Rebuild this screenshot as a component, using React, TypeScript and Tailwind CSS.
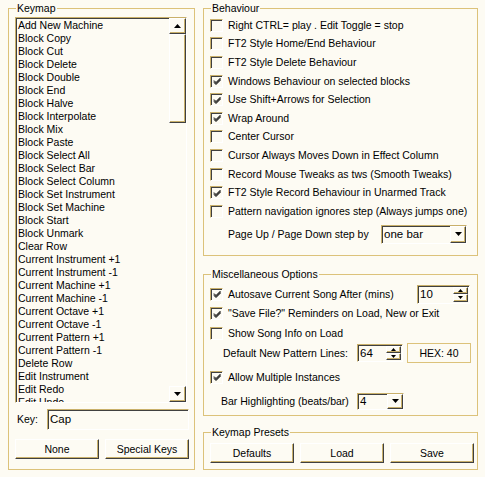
import React from "react";

const SUNKEN =
  "border border-t-[#c9b06a] border-l-[#c9b06a] border-b-white border-r-white shadow-[inset_1px_1px_0_#404040]";
const RAISED =
  "border border-t-white border-l-white border-b-[#404040] border-r-[#404040] shadow-[inset_-1px_-1px_0_#c9b06a] bg-[#fdfbf3]";

const KEYS = [
  "Add New Machine",
  "Block Copy",
  "Block Cut",
  "Block Delete",
  "Block Double",
  "Block End",
  "Block Halve",
  "Block Interpolate",
  "Block Mix",
  "Block Paste",
  "Block Select All",
  "Block Select Bar",
  "Block Select Column",
  "Block Set Instrument",
  "Block Set Machine",
  "Block Start",
  "Block Unmark",
  "Clear Row",
  "Current Instrument +1",
  "Current Instrument -1",
  "Current Machine +1",
  "Current Machine -1",
  "Current Octave +1",
  "Current Octave -1",
  "Current Pattern +1",
  "Current Pattern -1",
  "Delete Row",
  "Edit Instrument",
  "Edit Redo",
  "Edit Undo",
];

const BEHAVIOUR: [string, boolean][] = [
  ["Right CTRL= play . Edit Toggle = stop", false],
  ["FT2 Style Home/End Behaviour", false],
  ["FT2 Style Delete Behaviour", false],
  ["Windows Behaviour on selected blocks", true],
  ["Use Shift+Arrows for Selection", true],
  ["Wrap Around", true],
  ["Center Cursor", false],
  ["Cursor Always Moves Down in Effect Column", false],
  ["Record Mouse Tweaks as tws (Smooth Tweaks)", false],
  ["FT2 Style Record Behaviour in Unarmed Track", true],
  ["Pattern navigation ignores step (Always jumps one)", false],
];

function Tri({ up = false, w = 7 }: { up?: boolean; w?: number }) {
  const h = Math.ceil(w / 2);
  return (
    <svg width={w} height={h} viewBox={`0 0 ${w} ${h}`} className="block">
      <polygon points={up ? `0,${h} ${w},${h} ${w / 2},0` : `0,0 ${w},0 ${w / 2},${h}`} fill="#000" />
    </svg>
  );
}

function Check({ on }: { on: boolean }) {
  return (
    <span className={`${SUNKEN} w-[13px] h-[13px] shrink-0 bg-[#fdfbf3] flex items-center justify-center`}>
      {on && (
        <svg width="9" height="9" viewBox="0 0 9 9" className="block ml-[1px] mt-[1px]">
          <path d="M1 3.5 L3 5.5 L7.5 1 M1 4.5 L3 6.5 L7.5 2 M1 5.5 L3 7.5 L7.5 3" stroke="#000" strokeWidth="1" fill="none" />
        </svg>
      )}
    </span>
  );
}

function Row({ label, on }: { label: string; on: boolean }) {
  return (
    <div className="flex items-center gap-[5px]">
      <Check on={on} />
      <span className="whitespace-nowrap">{label}</span>
    </div>
  );
}

function Combo({ value, w }: { value: string; w: string }) {
  return (
    <div className={`${SUNKEN} ${w} flex items-stretch bg-[#fdfbf3]`}>
      <span className="flex-1 pl-[2px] flex items-center text-[11.5px]">{value}</span>
      <span className={`${RAISED} w-[16px] flex items-center justify-center`}>
        <Tri w={7} />
      </span>
    </div>
  );
}

function Spin({ value, w }: { value: string; w: string }) {
  return (
    <div className={`${SUNKEN} ${w} flex items-stretch bg-[#fdfbf3]`}>
      <span className="flex-1 pl-[2px] flex items-center text-[11.5px]">{value}</span>
      <span className="flex flex-col w-[15px] mr-[1px] my-[1px]">
        <span className={`${RAISED} flex-1 flex items-center justify-center`}>
          <Tri up w={5} />
        </span>
        <span className={`${RAISED} flex-1 flex items-center justify-center`}>
          <Tri w={5} />
        </span>
      </span>
    </div>
  );
}

function Group({ title, className, children }: { title: string; className: string; children: React.ReactNode }) {
  return (
    <fieldset className={`border border-[#dcc27a] ${className}`}>
      <legend className="ml-[7px] px-[1px] leading-[13px]">{title}</legend>
      {children}
    </fieldset>
  );
}

function Button({ label }: { label: string }) {
  return (
    <button className={`${RAISED} w-[84px] h-[20px] flex items-center justify-center`}>{label}</button>
  );
}

export default function App() {
  return (
    <div className="w-[485px] h-[477px] bg-[#fdfbf3] text-black text-[10.5px] leading-[13px] font-['Liberation_Sans',Arial,sans-serif] flex gap-[8px] pl-[8px] pt-[2px]">
      <Group title="Keymap" className="w-[187px] h-[468px]">
        <div className="pl-[6px] pt-[2px]">
          <div className={`${SUNKEN} w-[172px] h-[386px] flex overflow-hidden bg-[#fdfbf3]`}>
            <div className="flex-1 pl-[2px] pt-[1px] flex flex-col">
              {KEYS.map((k) => (
                <span key={k} className="h-[13px] whitespace-nowrap">
                  {k}
                </span>
              ))}
            </div>
            <div className="w-[17px] flex flex-col">
              <span className={`${RAISED} h-[16px] flex items-center justify-center`}>
                <Tri up />
              </span>
              <span className={`${RAISED} h-[89px]`} />
              <span className="flex-1" />
              <span className={`${RAISED} h-[16px] flex items-center justify-center`}>
                <Tri />
              </span>
            </div>
          </div>
          <div className="flex items-center mt-[6px] gap-[9px] pl-[2px]">
            <span>Key:</span>
            <div className={`${SUNKEN} w-[142px] h-[21px] pl-[2px] flex items-center text-[11.5px]`}>Cap</div>
          </div>
          <div className="flex gap-[6px] mt-[9px]">
            <Button label="None" />
            <Button label="Special Keys" />
          </div>
        </div>
      </Group>

      <div className="w-[275px] flex flex-col">
        <Group title="Behaviour" className="h-[254px]">
          <div className="pl-[6px] pt-[1px] flex flex-col">
            {BEHAVIOUR.map(([label, on]) => (
              <div key={label} className="h-[18.6px] flex items-center">
                <Row label={label} on={on} />
              </div>
            ))}
            <div className="flex items-center mt-[4px] pl-[18px]">
              <span className="w-[153px] whitespace-nowrap">Page Up / Page Down step by</span>
              <Combo value="one bar" w="w-[86px] h-[19px]" />
            </div>
          </div>
        </Group>

        <Group title="Miscellaneous Options" className="h-[148px] mt-[12px]">
          <div className="pl-[6px] pt-[3px] flex flex-col">
            <div className="h-[20px] flex items-center justify-between pr-[7px]">
              <Row label="Autosave Current Song After (mins)" on={true} />
              <Spin value="10" w="w-[53px] h-[19px]" />
            </div>
            <div className="h-[19px] flex items-center">
              <Row label={'"Save File?" Reminders on Load, New or Exit'} on={true} />
            </div>
            <div className="h-[20px] flex items-center">
              <Row label="Show Song Info on Load" on={false} />
            </div>
            <div className="h-[20px] flex items-center pl-[13px]">
              <span className="w-[134px] whitespace-nowrap">Default New Pattern Lines:</span>
              <Spin value="64" w="w-[46px] h-[18px]" />
              <div className="ml-[4px] w-[64px] h-[20px] border border-[#dcc27a] flex items-center justify-center">
                HEX: 40
              </div>
            </div>
            <div className="h-[28px] flex items-center">
              <Row label="Allow Multiple Instances" on={true} />
            </div>
            <div className="h-[20px] flex items-center pl-[11px]">
              <span className="w-[136px] whitespace-nowrap">Bar Highlighting (beats/bar)</span>
              <Combo value="4" w="w-[47px] h-[17px]" />
            </div>
          </div>
        </Group>

        <Group title="Keymap Presets" className="h-[44px] mt-[10px]">
          <div className="pl-[6px] pt-[4px] flex gap-[6px]">
            <Button label="Defaults" />
            <Button label="Load" />
            <Button label="Save" />
          </div>
        </Group>
      </div>
    </div>
  );
}
